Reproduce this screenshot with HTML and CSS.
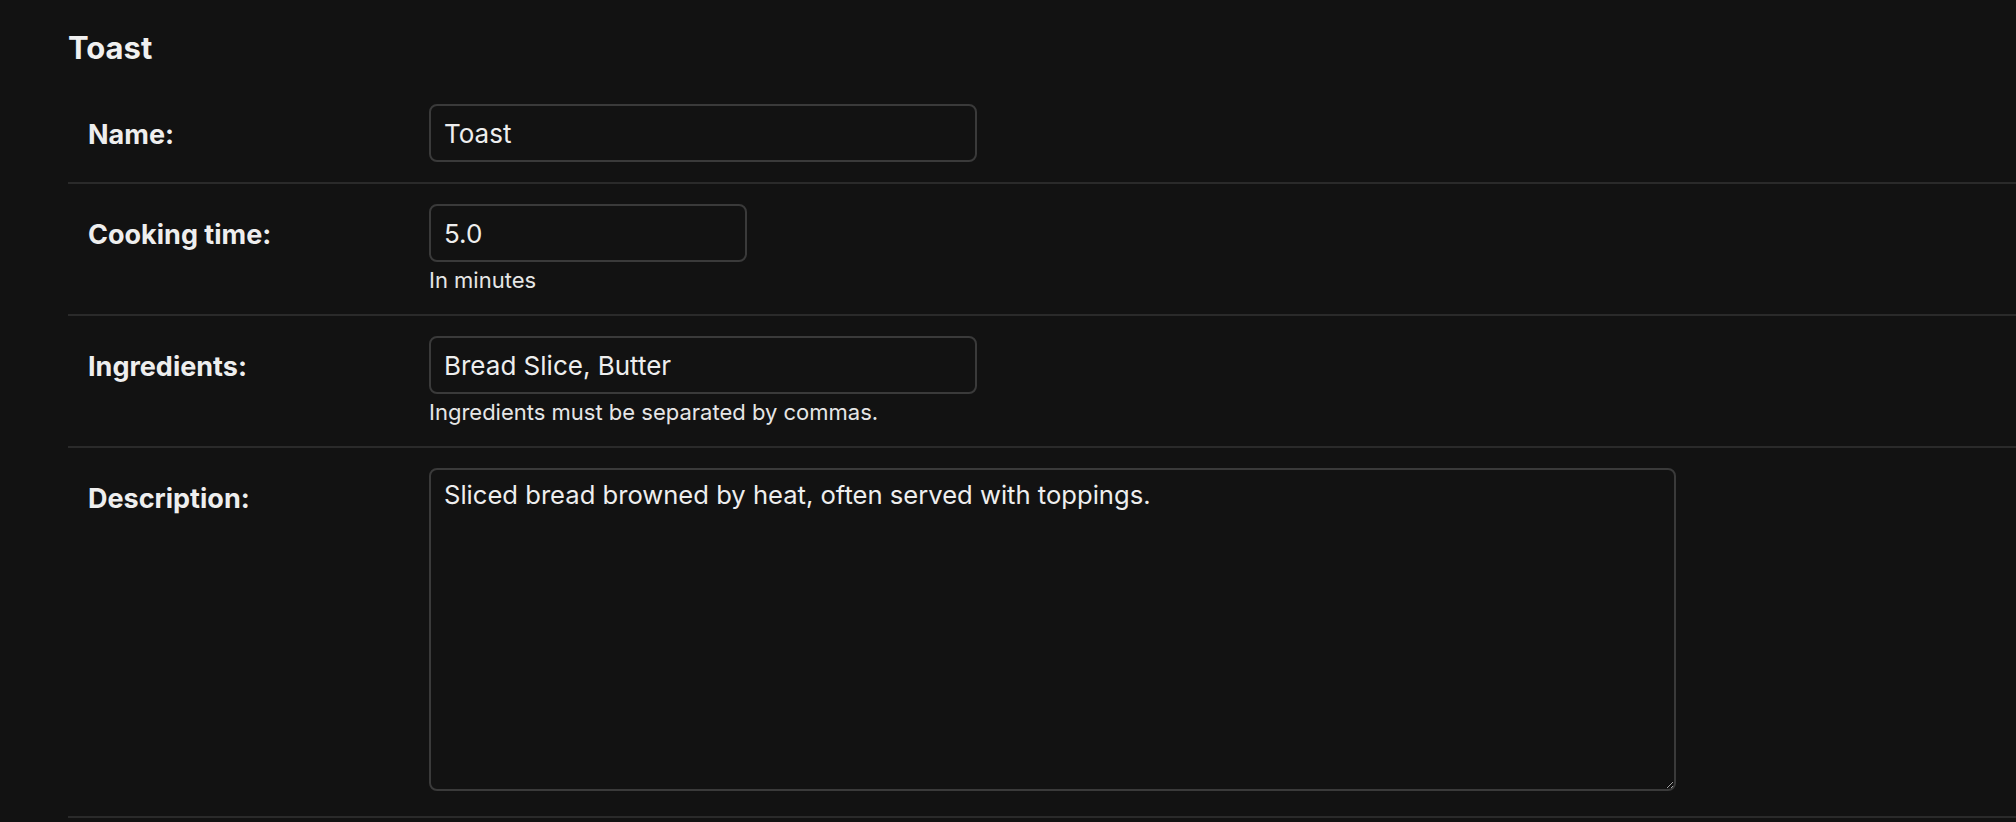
FILE: index.html
```html
<!DOCTYPE html>
<html lang="en">
<head>
<meta charset="utf-8">
<title>Toast</title>
<link rel="stylesheet" href="styles.css">
</head>
<body>
<div class="content">
  <h2 class="title">Toast</h2>
  <fieldset class="module">
    <div class="form-row">
      <label class="field-label" for="id_name">Name:</label>
      <div class="field-box">
        <input class="text-input wide" id="id_name" type="text" value="Toast">
      </div>
    </div>
    <div class="form-row">
      <label class="field-label" for="id_time">Cooking time:</label>
      <div class="field-box">
        <input class="text-input narrow" id="id_time" type="text" value="5.0">
        <div class="help">In minutes</div>
      </div>
    </div>
    <div class="form-row">
      <label class="field-label" for="id_ing">Ingredients:</label>
      <div class="field-box">
        <input class="text-input wide" id="id_ing" type="text" value="Bread Slice, Butter">
        <div class="help">Ingredients must be separated by commas.</div>
      </div>
    </div>
    <div class="form-row form-row-large">
      <label class="field-label" for="id_desc">Description:</label>
      <div class="field-box">
        <textarea class="text-area" id="id_desc">Sliced bread browned by heat, often served with toppings.</textarea>
      </div>
    </div>
  </fieldset>
</div>
</body>
</html>
```
FILE: styles.css
```css
html {
  color-scheme: dark;
}

body {
  margin: 0;
  background: #121212;
  color: #eeeeee;
  font-family: "Inter", "Noto Sans", sans-serif;
}

.content {
  padding-left: 68px;
}

.title {
  margin: 28px 0 16px;
  font-size: 31px;
  line-height: 40px;
  font-weight: 700;
  color: #f0f0f0;
}

.module {
  margin: 0;
  padding: 0;
  border: 0;
  min-width: 0;
}

.form-row {
  display: flex;
  align-items: flex-start;
  padding: 20px 0 20px 20px;
  border-bottom: 2px solid #2a2a2a;
}

.form-row-large {
  padding-bottom: 25px;
}

.field-label {
  flex: 0 0 341px;
  box-sizing: border-box;
  padding-top: 13px;
  font-size: 27px;
  line-height: 36px;
  font-weight: 700;
  color: #eeeeee;
}

.field-box {
  display: flex;
  flex-direction: column;
  align-items: flex-start;
}

.text-input {
  box-sizing: border-box;
  height: 58px;
  padding: 0 13px;
  border: 2px solid #3a3a3a;
  border-radius: 8px;
  background: #121212;
  color: #eeeeee;
  font-family: "Inter", "Noto Sans", sans-serif;
  font-size: 26px;
  outline: none;
}

.wide {
  width: 548px;
}

.narrow {
  width: 318px;
}

.help {
  margin-top: 5px;
  font-size: 22px;
  line-height: 27px;
  color: #e6e6e6;
}

.text-area {
  display: block;
  box-sizing: border-box;
  width: 1247px;
  height: 323px;
  margin: 0;
  padding: 9px 13px;
  border: 2px solid #3a3a3a;
  border-radius: 8px;
  background: #121212;
  color: #eeeeee;
  font-family: "Inter", "Noto Sans", sans-serif;
  font-size: 25.6px;
  line-height: normal;
  outline: none;
}
```
